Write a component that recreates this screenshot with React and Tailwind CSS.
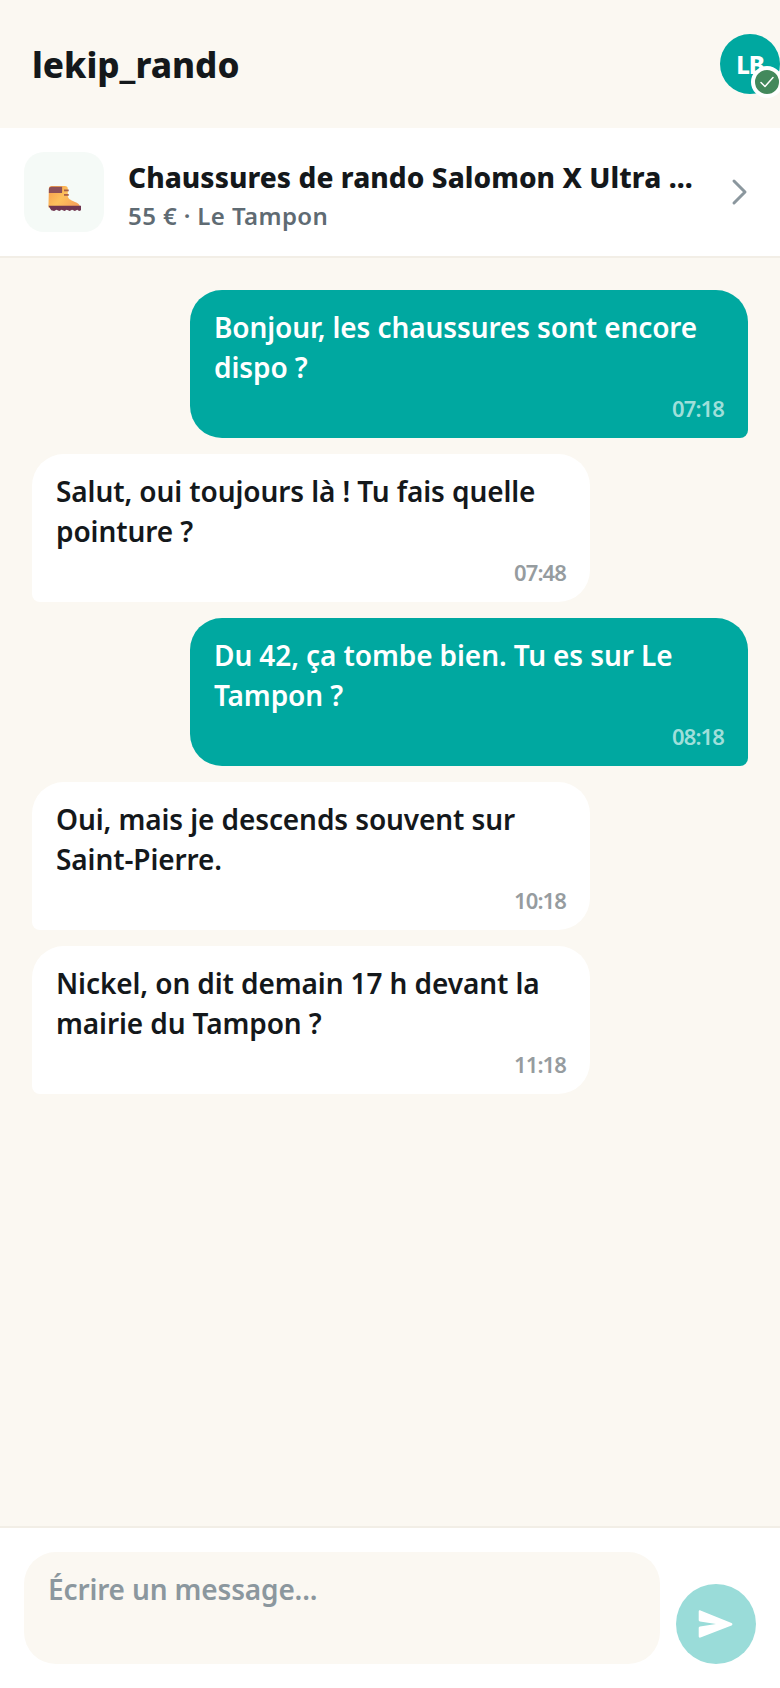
import React from "react";

function Bubble({ mine, text, time }) {
  return (
    <div
      className={
        mine
          ? "self-end w-[558px] rounded-[32px] rounded-br-lg bg-[#00a8a0] px-6 pt-[17px] pb-4 text-white"
          : "self-start w-[558px] rounded-[32px] rounded-bl-lg bg-white px-6 pt-[17px] pb-4 text-[#14181b]"
      }
    >
      <p className="text-[28px] leading-[40px] font-semibold tracking-[-0.1px] whitespace-pre-line">{text}</p>
      <div
        className={
          mine
            ? "mt-[7px] text-right text-[22px] leading-[28px] font-semibold tracking-[-0.9px] text-[#9fdfda]"
            : "mt-[7px] text-right text-[22px] leading-[28px] font-semibold tracking-[-0.9px] text-[#969c9f]"
        }
      >
        {time}
      </div>
    </div>
  );
}

function Boot() {
  return (
    <svg width="34" height="27" viewBox="0 0 36 30" preserveAspectRatio="none" className="mt-[13px]">
      <defs>
        <linearGradient id="b" x1="0" y1="0" x2="1" y2="0.6">
          <stop offset="0" stopColor="#f59a4c" />
          <stop offset="0.55" stopColor="#fdc05c" />
          <stop offset="1" stopColor="#f7a45a" />
        </linearGradient>
      </defs>
      <path d="M2 4a3 3 0 0 1 3-3h14a3 3 0 0 1 3 3v8c0 3 3 5 7 6.500c4 1.500 6 3 6 6.500H1.500z" fill="url(#b)" />
      <path d="M2 5a3 3 0 0 1 3-3h11v6a1 1 0 0 1-1 1H2z" fill="#8c4f58" />
      <rect x="18" y="5" width="5" height="2" fill="#a8604a" />
      <rect x="18" y="10" width="5" height="2" fill="#a8604a" />
      <path d="M1.500 23h34.500v5l-2 1-2-1.500-2.500 1.500-3-1.500-2.500 1.500-3-1.500-2.500 1.500-3-1.500-2.500 1.500-3-1.500-2.500 1.500-3-1z" fill="#6f3550" />
    </svg>
  );
}

export default function App() {
  return (
    <div
      className="relative flex h-[1688px] w-[780px] flex-col overflow-hidden bg-[#fbf8f2] text-[#14181b]"
      style={{ fontFamily: '"Noto Sans", "Open Sans", sans-serif' }}
    >
      <header className="flex h-32 shrink-0 items-center justify-between pl-8">
        <h1 className="pt-[2px] text-[35px] leading-[44px] font-extrabold">lekip_rando</h1>
        <div className="relative flex h-[60px] w-[60px] items-center justify-center rounded-full bg-[#00a8a0] pt-[2px] text-[24px] font-extrabold tracking-[-1px] text-white">
          LB
          <span className="absolute -right-[3px] -bottom-1 flex h-8 w-8 items-center justify-center rounded-full border-4 border-white bg-[#43895c]">
            <svg width="18" height="18" viewBox="0 0 18 18" fill="none" stroke="#ffffff" strokeWidth="1.500" strokeLinecap="round" strokeLinejoin="round">
              <path d="M3 9.500l4 4 8-9" />
            </svg>
          </span>
        </div>
      </header>

      <section className="flex h-[130px] shrink-0 items-center border-b-2 border-[#f2eee6] bg-white pl-6 pr-[31px]">
        <div className="flex h-20 w-20 shrink-0 items-center justify-center rounded-[20px] bg-[#f5faf7]">
          <Boot />
        </div>
        <div className="ml-6 min-w-0 flex-1 pt-1">
          <div className="truncate text-[28px] leading-[40px] font-extrabold tracking-[0.07px]">Chaussures de rando Salomon X Ultra ...</div>
          <div className="mt-[3px] text-[24px] leading-[32px] font-semibold tracking-[0.4px] text-[#5f6b73]">55 € · Le Tampon</div>
        </div>
        <svg width="20" height="30" viewBox="0 0 20 30" fill="none" stroke="#8b979e" strokeWidth="3" strokeLinecap="round" strokeLinejoin="round" className="ml-6 shrink-0">
          <path d="M5 4l11 11-11 11" />
        </svg>
      </section>

      <main className="flex flex-1 flex-col gap-4 px-8 pt-8">
        <Bubble mine text={"Bonjour, les chaussures sont encore\ndispo ?"} time="07:18" />
        <Bubble text={"Salut, oui toujours là ! Tu fais quelle\npointure ?"} time="07:48" />
        <Bubble mine text={"Du 42, ça tombe bien. Tu es sur Le\nTampon ?"} time="08:18" />
        <Bubble text={"Oui, mais je descends souvent sur\nSaint-Pierre."} time="10:18" />
        <Bubble text={"Nickel, on dit demain 17 h devant la\nmairie du Tampon ?"} time="11:18" />
      </main>

      <footer className="flex h-[162px] shrink-0 items-end gap-4 border-t-2 border-[#f2eee6] bg-white pb-6 pl-6 pr-6">
        <div className="h-28 w-[636px] rounded-[32px] bg-[#fbf8f2] px-6 pt-[17px] text-[28px] leading-[40px] font-semibold tracking-[-0.15px] text-[#8b979e]">
          Écrire un message...
        </div>
        <button className="flex h-20 w-20 items-center justify-center rounded-full bg-[#9adcd9]">
          <svg width="36" height="30" viewBox="0 0 36 30" fill="white">
            <path d="M2.500 1.500c-1 -.4-1.800 .2-1.800 1.200v8.300c0 .8 .5 1.300 1.300 1.500L18 15 2 17.500c-.8 .2-1.300 .7-1.300 1.500v8.300c0 1 .8 1.600 1.800 1.200l31-12c1.200 -.5 1.200 -2 0-2.500z" />
          </svg>
        </button>
      </footer>
    </div>
  );
}
